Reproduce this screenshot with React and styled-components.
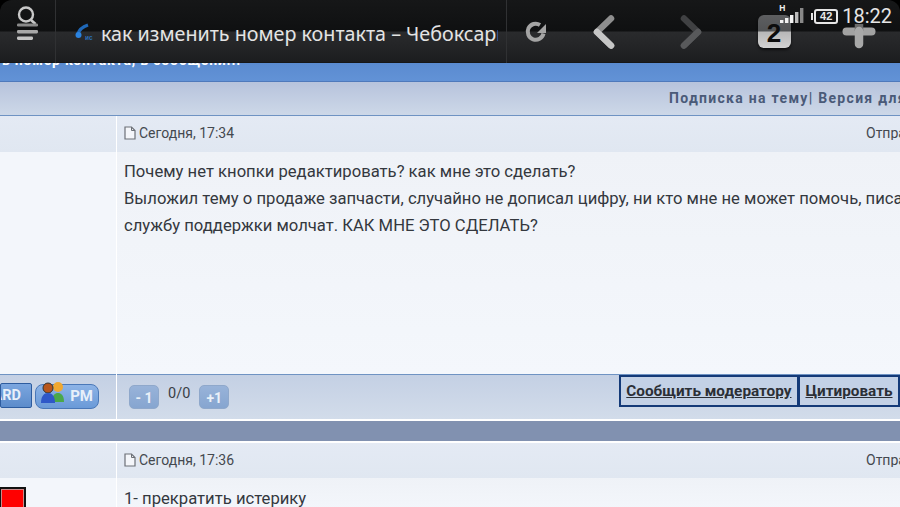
import React from "react";
import styled, { createGlobalStyle } from "styled-components";

const Global = createGlobalStyle`
  html, body { margin: 0; padding: 0; background: #f4f7fc; }
  body { font-family: Roboto, "Liberation Sans", sans-serif; }
`;

const Page = styled.div`
  width: 900px;
  height: 507px;
  overflow: hidden;
  position: relative;
  background: #000;
  display: flex;
  flex-direction: column;
`;

const Toolbar = styled.header`
  flex: 0 0 63px;
  height: 63px;
  position: relative;
  z-index: 2;
  display: flex;
  align-items: stretch;
  border-radius: 12px 12px 0 0;
  background: linear-gradient(#161718 0, #0f1011 31px, #2a2b2d 32px, #1c1d1f 62px, #111 63px);
`;

const Cell = styled.div`
  flex: 0 0 ${p => p.$w}px;
  width: ${p => p.$w}px;
  display: flex;
  align-items: center;
  justify-content: center;
  border-right: ${p => (p.$line ? "1px solid #303133" : "none")};
  overflow: hidden;
  min-width: 0;
`;

const UrlCell = styled(Cell)`
  justify-content: flex-start;
  padding: 0 8px 0 19px;
  box-sizing: content-box;
  width: 423px;
  flex: 0 0 423px;
  gap: 7px;
`;

const Title = styled.span`
  color: #e4e4e4;
  font: 400 19.7px/26px "Noto Sans", Roboto, sans-serif;
  white-space: nowrap;
  overflow: hidden;
  min-width: 0;
  position: relative;
  top: 2px;
`;

const TabCount = styled.div`
  width: 33px;
  height: 33px;
  border-radius: 6px;
  background: linear-gradient(#5d5e60 0, #525456 16px, #b8b8b8 17px, #d2d2d2 100%);
  color: #0c0c0c;
  font: 700 26px/36px "Liberation Sans", sans-serif;
  text-align: center;
  box-shadow: 0 2px 3px rgba(0,0,0,.6);
`;

const StatusBar = styled.div`
  position: absolute;
  right: 8px;
  top: 4px;
  display: flex;
  align-items: center;
  gap: 4px;
  color: #dcdcdc;
`;

const Signal = styled.div`
  position: relative;
  width: 24px;
  height: 20px;
  align-self: flex-start;
  margin-right: 6px;
`;

const NetType = styled.span`
  position: absolute;
  left: -1px;
  top: 1px;
  font: 700 8.5px/7px "Liberation Sans", sans-serif;
  color: #eee;
`;

const Battery = styled.div`
  width: 20px;
  height: 11px;
  border: 2px solid #e6e6e6;
  border-radius: 3px;
  font: 700 11px/11px "Liberation Sans", sans-serif;
  color: #e6e6e6;
  text-align: center;
  position: relative;
  &::before {
    content: "";
    position: absolute;
    left: -5px;
    top: 2px;
    width: 2px;
    height: 7px;
    background: #e6e6e6;
  }
`;

const Clock = styled.span`
  font: 400 20px/24px Roboto, sans-serif;
  color: #e6e6e6;
`;

const Banner = styled.div`
  flex: 0 0 19px;
  height: 19px;
  box-sizing: border-box;
  background: linear-gradient(#5a8bd0, #6292d6);
  border-bottom: 1px solid #4f79bb;
  color: #fff;
  font: 700 14px/14px Roboto, sans-serif;
  letter-spacing: 0.8px;
  white-space: nowrap;
`;

const BannerText = styled.div`
  margin-top: -10px;
  margin-left: -6px;
`;

const Links = styled.div`
  flex: 0 0 34px;
  height: 34px;
  box-sizing: border-box;
  background: linear-gradient(#b7c3dc, #cdd8e8);
  border-bottom: 1px solid #6f93c3;
  color: #4a5a78;
  font: 700 14px/33px Roboto, sans-serif;
  letter-spacing: 1.3px;
  white-space: nowrap;
  padding-left: 669px;
`;

const Row = styled.div`
  display: grid;
  grid-template-columns: 116px 1fr;
  column-gap: 1px;
  flex: 0 0 ${p => p.$h}px;
  height: ${p => p.$h}px;
  background: #fff;
  min-width: 0;
`;

const HeadCell = styled.div`
  background: linear-gradient(#e4eaf4, #e0e7f1);
`;

const HeadMain = styled(HeadCell)`
  display: flex;
  align-items: center;
  padding: 0 0 2px 7px;
  gap: 3px;
  font: 400 14px/1 Roboto, sans-serif;
  color: #44484f;
  white-space: nowrap;
  overflow: hidden;
`;

const Sent = styled.span`
  margin-left: auto;
  margin-right: -10px;
  width: 44px;
  overflow: hidden;
  text-align: left;
  display: block;
`;

const BodyCell = styled.div`
  background: #f3f6fb;
  overflow: hidden;
`;

const BodyMain = styled(BodyCell)`
  background: linear-gradient(#eff2f7, #f4f7fc);
  padding: ${p => p.$top}px 0 0 7px;
  font: 400 16.65px/27px Roboto, sans-serif;
  color: #34383e;
  white-space: nowrap;
`;

const FootCell = styled.div`
  background: linear-gradient(#c4d0e4, #d2dcea);
  border-top: 1px solid #6f93c3;
  border-bottom: 2px solid #fff;
  box-sizing: border-box;
  display: flex;
  overflow: hidden;
`;

const FootLeft = styled(FootCell)`
  justify-content: flex-end;
  padding: 8px 17px 0 0;
  gap: 3px;
`;

const FootMain = styled(FootCell)`
  padding: 9px 0 0 12px;
  align-items: flex-start;
  font: 400 14.5px/24px Roboto, sans-serif;
  color: #3a3f46;
`;

const AimButton = styled.div`
  height: 25px;
  width: 32px;
  box-sizing: border-box;
  display: flex;
  justify-content: flex-end;
  background: linear-gradient(#7ba6df, #5c8ccb);
  border: 1px solid #2d5c9f;
  border-radius: 2px;
  color: #e8f0fa;
  font: 700 14.5px/23px Roboto, sans-serif;
  padding: 0 10px 0 0;
  overflow: hidden;
  white-space: nowrap;
`;

const PmButton = styled.div`
  height: 25px;
  width: 64px;
  margin-top: 1px;
  box-sizing: border-box;
  background: linear-gradient(#8db3e6, #6a9ad8);
  border: 1px solid #4a78b8;
  border-radius: 8px;
  color: #e8f0fa;
  font: 700 15px/23px Roboto, sans-serif;
  display: flex;
  justify-content: flex-end;
  padding-right: 5px;
  position: relative;
`;

const People = styled.svg`
  position: absolute;
  left: 3px;
  top: -4px;
`;

const Vote = styled.div`
  flex: 0 0 auto;
  width: 30px;
  height: 24px;
  border-radius: 5px;
  border: 1px solid #8fa8cb;
  box-sizing: border-box;
  background: linear-gradient(#98b3d9, #86a5d0);
  color: #eaf0f8;
  font: 700 14px/24px Roboto, sans-serif;
  text-align: center;
  margin-top: 1px;
`;

const Score = styled.span`
  margin: 0 9px 0 9px;
  position: relative;
  top: -2px;
`;

const Actions = styled.div`
  margin-left: auto;
  flex: 0 0 auto;
  display: flex;
  margin-top: -9px;
  margin-right: -81px;
  height: 32px;
`;

const Action = styled.a`
  display: block;
  height: 32px;
  box-sizing: border-box;
  padding: 0 5.5px;
  background: #c3d1e6;
  border: 2px solid #143a78;
  margin-right: -1px;
  color: #2b2f36;
  font: 700 15.3px/28px Roboto, sans-serif;
  text-decoration: underline;
  white-space: nowrap;
`;

const Divider = styled.div`
  flex: 0 0 20px;
  height: 20px;
  background: #8191b0;
  margin-bottom: 2px;
  box-shadow: 0 2px 0 #fff;
`;

const Avatar = styled.div`
  width: 27px;
  height: 26px;
  margin: 9px 0 0 -1px;
  background: #f00;
  border: 2px solid #111;
  box-shadow: inset 0 0 0 1px #c88;
  box-sizing: border-box;
`;

const DocIcon = () => (
  <svg width="12" height="14" viewBox="0 0 12 14" fill="none" aria-hidden="true">
    <path d="M1 1h6.5L11 4.5V13H1z" fill="#f4f6fa" stroke="#6c7077" strokeWidth="1.2" />
    <path d="M7.5 1v3.5H11" stroke="#6c7077" strokeWidth="1" />
  </svg>
);

const SearchMenu = () => (
  <svg width="55" height="63" viewBox="0 0 55 63" fill="none" aria-hidden="true">
    <circle cx="26" cy="14.5" r="7" stroke="#c8c8c8" strokeWidth="2.4" />
    <path d="M31 20l4.5 4" stroke="#c8c8c8" strokeWidth="2.6" />
    <rect x="17" y="23.5" width="21" height="3" rx="1.3" fill="#8a8a8a" />
    <rect x="17" y="30" width="21" height="3.4" rx="1.3" fill="#a8a8a8" />
    <rect x="17" y="36.5" width="16" height="3.4" rx="1.3" fill="#c4c4c4" />
  </svg>
);

const PhoneFavicon = () => (
  <svg width="19" height="18" viewBox="0 0 19 18" fill="none" style={{ flexShrink: 0 }} aria-hidden="true">
    <path d="M3 11C4 7 7 4 13 2" stroke="#1f68b8" strokeWidth="3.4" />
    <circle cx="3.5" cy="12" r="3" fill="#2b83e0" />
    <text x="10" y="17" fontSize="6.5" fontWeight="700" fill="#2b6fb8" fontFamily="Liberation Sans">ис</text>
  </svg>
);

const Reload = () => (
  <svg width="24" height="24" viewBox="0 0 24 24" fill="none" aria-hidden="true">
    <path d="M19.5 13.5A8 8 0 1 1 16 5" stroke="#a4a4a4" strokeWidth="4" />
    <path d="M22 4v9h-9z" fill="#a4a4a4" />
  </svg>
);

const Chevron = ({ flip, top, bottom }) => (
  <svg width="24" height="34" viewBox="0 0 24 34" fill="none" aria-hidden="true">
    <path d={flip ? "M5 3.5L19 17 5 30.5" : "M19 3.5L5 17l14 13.5"} stroke={top} strokeWidth="6.5" strokeLinecap="round" strokeLinejoin="round" />
    <path d={flip ? "M19 17L5 30.5" : "M5 17l14 13.5"} stroke={bottom} strokeWidth="6.5" strokeLinecap="round" strokeLinejoin="round" />
  </svg>
);

const Plus = () => (
  <svg width="34" height="34" viewBox="0 0 34 34" aria-hidden="true">
    <path d="M4.5 16.5h25" stroke="#a2a2a2" strokeWidth="8" strokeLinecap="round" />
    <path d="M17 9V16" stroke="#6a6a6a" strokeWidth="8.5" />
    <path d="M17 16V29" stroke="#a8a8a8" strokeWidth="8.5" strokeLinecap="round" />
  </svg>
);

const Bars = () => (
  <svg width="24" height="20" viewBox="0 0 24 20" style={{ display: "block" }} aria-hidden="true">
    <rect x="0" y="16" width="3.4" height="3" fill="#f2f2f2" />
    <rect x="5" y="14" width="3.4" height="5" fill="#f2f2f2" />
    <rect x="10" y="11" width="3.4" height="8" fill="#f2f2f2" />
    <rect x="15" y="8" width="3.4" height="11" fill="#bbb" />
    <rect x="20" y="4" width="3.4" height="15" fill="#888" />
  </svg>
);

const PeopleIcon = () => (
  <People width="28" height="24" viewBox="0 0 28 24" aria-hidden="true">
    <circle cx="19" cy="6" r="5" fill="#f0a830" />
    <path d="M13 21c0-7 3-9 6-9s6 2 6 9z" fill="#4aa84a" />
    <circle cx="9" cy="7" r="5" fill="#b8561c" stroke="#333" strokeWidth="1" />
    <path d="M2 22c0-7 3-10 7-10s7 3 7 10z" fill="#2f58c8" />
  </People>
);

const Post = ({ time, children, top, headHeight, bodyHeight, avatar }) => (
  <>
    <Row $h={headHeight}>
      <HeadCell />
      <HeadMain>
        <DocIcon />
        <span>{time}</span>
        <Sent>Отправлено</Sent>
      </HeadMain>
    </Row>
    <Row $h={bodyHeight}>
      <BodyCell>{avatar}</BodyCell>
      <BodyMain $top={top}>{children}</BodyMain>
    </Row>
  </>
);

export default function App() {
  return (
    <Page>
      <Global />
      <Toolbar>
        <Cell $w={55} $line><SearchMenu /></Cell>
        <UrlCell $line>
          <PhoneFavicon />
          <Title>как изменить номер контакта – Чебоксары</Title>
        </UrlCell>
        <Cell $w={57}><Reload /></Cell>
        <Cell $w={80}><Chevron top="#8e8e8e" bottom="#c6c6c6" /></Cell>
        <Cell $w={94}><Chevron flip top="#404143" bottom="#58595b" /></Cell>
        <Cell $w={72}><TabCount>2</TabCount></Cell>
        <Cell $w={97}><Plus /></Cell>
        <StatusBar>
          <Signal><NetType>H</NetType><Bars /></Signal>
          <Battery>42</Battery>
          <Clock>18:22</Clock>
        </StatusBar>
      </Toolbar>
      <Banner><BannerText>ть номер контакта, в сообщени...</BannerText></Banner>
      <Links>Подписка на тему| Версия для печати</Links>
      <Post time="Сегодня, 17:34" top={6} headHeight={36} bodyHeight={222}>
        Почему нет кнопки редактировать? как мне это сделать?<br />
        Выложил тему о продаже запчасти, случайно не дописал цифру, ни кто мне не может помочь, писал<br />
        службу поддержки молчат. КАК МНЕ ЭТО СДЕЛАТЬ?
      </Post>
      <Row $h={47}>
        <FootLeft>
          <AimButton>ARD</AimButton>
          <PmButton><PeopleIcon />PM</PmButton>
        </FootLeft>
        <FootMain>
          <Vote>- 1</Vote>
          <Score>0/0</Score>
          <Vote>+1</Vote>
          <Actions>
            <Action>Сообщить модератору</Action>
            <Action>Цитировать</Action>
            <Action>Ответить</Action>
          </Actions>
        </FootMain>
      </Row>
      <Divider />
      <Post time="Сегодня, 17:36" top={7} headHeight={35} bodyHeight={40} avatar={<Avatar />}>
        1- прекратить истерику
      </Post>
    </Page>
  );
}
